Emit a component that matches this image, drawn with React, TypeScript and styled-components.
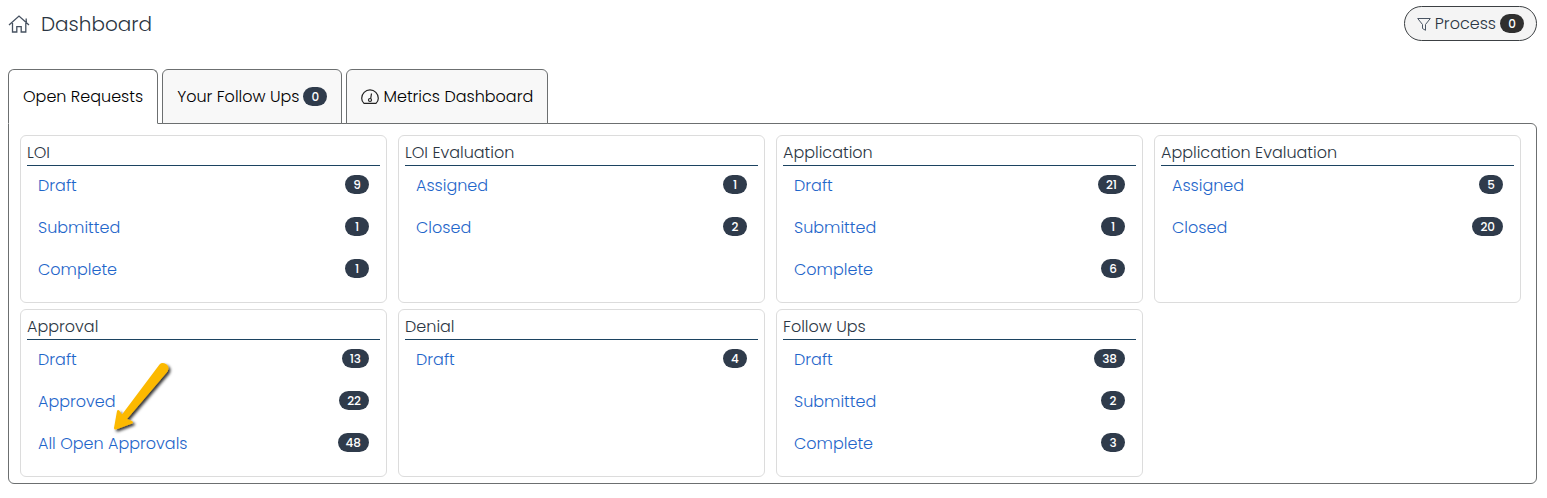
import React from "react";
import styled, { createGlobalStyle, css } from "styled-components";

const GlobalStyle = createGlobalStyle`
  *, *::before, *::after { box-sizing: border-box; }
  body {
    margin: 0;
    background: #fff;
    color: #2b3643;
    font-family: Poppins, Inter, "Liberation Sans", sans-serif;
    font-size: 16px;
    font-weight: 300;
    line-height: 24px;
  }
`;

const Page = styled.main`
  padding: 6px 10px 14px 8px;
`;

const Header = styled.header`
  display: flex;
  align-items: center;
  justify-content: space-between;
  height: 35px;
  margin-bottom: 28px;
`;

const Title = styled.h1`
  display: flex;
  align-items: center;
  gap: 11px;
  margin: 0;
  font-size: 20px;
  font-weight: 300;
  line-height: 32px;
`;

const Badge = styled.span<{ $dark?: boolean }>`
  display: inline-block;
  min-width: 24px;
  padding: 0 8px;
  border-radius: 10px;
  background: ${(p) => (p.$dark ? "#2f2f2f" : "#2f3b4b")};
  color: #fff;
  font-size: 12px;
  font-weight: 500;
  line-height: 19px;
  text-align: center;
`;

const ProcessButton = styled.button`
  display: flex;
  align-items: center;
  gap: 4px;
  height: 35px;
  padding: 0 12px;
  border: 1px solid #3c4043;
  border-radius: 18px;
  background: #f4f4f4;
  color: inherit;
  font: inherit;
`;

const TabList = styled.div`
  display: flex;
  gap: 4px;
`;

const Tab = styled.button<{ $active?: boolean }>`
  position: relative;
  display: flex;
  align-items: center;
  gap: 4px;
  height: 55px;
  margin-bottom: -1px;
  padding: 0 14px;
  border: 1px solid #6c6f70;
  border-radius: 6px 6px 0 0;
  background: #f8f8f8;
  color: #000;
  font: inherit;
  ${(p) =>
    p.$active &&
    css`
      border-bottom-color: #fff;
      background: #fff;
    `}
`;

const Panel = styled.section`
  display: grid;
  grid-template-columns: repeat(4, 1fr);
  gap: 6px 11px;
  padding: 11px 15px 6px 11px;
  border: 1px solid #6c6f70;
  border-radius: 0 6px 6px 6px;
`;

const Card = styled.section`
  min-height: 168px;
  padding: 5px 6px;
  border: 1px solid #dcdcdc;
  border-radius: 6px;
`;

const CardTitle = styled.h2`
  margin: 0;
  border-bottom: 1px solid #1c4361;
  font-size: 16px;
  font-weight: 300;
  line-height: 24px;
`;

const StatusList = styled.ul`
  margin: 0;
  padding: 0 11px;
  list-style: none;
`;

const StatusRow = styled.li`
  display: flex;
  align-items: flex-start;
  justify-content: space-between;
  height: 42px;
  padding-top: 8px;

  ${Badge} {
    margin-top: 1px;
  }
`;

const StatusLink = styled.a`
  color: #1f66ca;
  text-decoration: none;
`;

const Arrow = styled.svg`
  position: absolute;
  top: 355px;
  left: 100px;
  pointer-events: none;
`;

const HomeIcon = () => (
  <svg width="22" height="20" viewBox="0 0 22 20" fill="none" stroke="#465160" strokeWidth="1.3" aria-hidden="true">
    <path d="M1 11 11 2l10 9M4.500 9V18H8.800V12.700H13.200V18H17.800V9M18.200 8V4.500" />
  </svg>
);

const FunnelIcon = () => (
  <svg width="14" height="14" viewBox="0 0 14 14" fill="none" stroke="#4a5563" aria-hidden="true">
    <path d="M.7 1.500h12.600L8.500 7.500V13.300L5.500 11.500V7.500Z" />
  </svg>
);

const GaugeIcon = () => (
  <svg width="18" height="16" viewBox="0 0 18 16" fill="none" stroke="#222" strokeWidth="1.200" aria-hidden="true">
    <path d="M3 14.400C1.500 13 .7 11 .7 9.200a8.300 8.300 0 0 1 16.600 0C17.300 11 16.500 13 15 14.400ZM10.500 4.500 9.700 9.500" />
    <circle cx="9" cy="11" r="1.500" />
  </svg>
);

type Status = [label: string, count: number];

const groups: { title: string; items: Status[] }[] = [
  { title: "LOI", items: [["Draft", 9], ["Submitted", 1], ["Complete", 1]] },
  { title: "LOI Evaluation", items: [["Assigned", 1], ["Closed", 2]] },
  { title: "Application", items: [["Draft", 21], ["Submitted", 1], ["Complete", 6]] },
  { title: "Application Evaluation", items: [["Assigned", 5], ["Closed", 20]] },
  { title: "Approval", items: [["Draft", 13], ["Approved", 22], ["All Open Approvals", 48]] },
  { title: "Denial", items: [["Draft", 4]] },
  { title: "Follow Ups", items: [["Draft", 38], ["Submitted", 2], ["Complete", 3]] },
];

export default function App() {
  return (
    <>
      <GlobalStyle />
      <Page>
        <Header>
          <Title>
            <HomeIcon />
            Dashboard
          </Title>
          <ProcessButton type="button">
            <FunnelIcon />
            Process
            <Badge $dark>0</Badge>
          </ProcessButton>
        </Header>
        <TabList role="tablist">
          <Tab type="button" role="tab" id="tab-open" aria-selected aria-controls="panel-open" $active>
            Open Requests
          </Tab>
          <Tab type="button" role="tab" aria-selected={false}>
            Your Follow Ups
            <Badge>0</Badge>
          </Tab>
          <Tab type="button" role="tab" aria-selected={false}>
            <GaugeIcon />
            Metrics Dashboard
          </Tab>
        </TabList>
        <Panel role="tabpanel" id="panel-open" aria-labelledby="tab-open">
          {groups.map((group) => (
            <Card key={group.title}>
              <CardTitle>{group.title}</CardTitle>
              <StatusList>
                {group.items.map(([label, count]) => (
                  <StatusRow key={label}>
                    <StatusLink href="#">{label}</StatusLink>
                    <Badge>{count}</Badge>
                  </StatusRow>
                ))}
              </StatusList>
            </Card>
          ))}
        </Panel>
      </Page>
      <Arrow width="76" height="84" viewBox="0 0 76 84" aria-hidden="true">
        <defs>
          <filter id="arrow-shadow" x="-20%" y="-20%" width="150%" height="150%">
            <feDropShadow dx="2" dy="2" stdDeviation="1.500" floodColor="#000" floodOpacity="0.8" />
          </filter>
        </defs>
        <path
          d="M59.500 9.500Q62 7 66 9Q70 12 67.500 16.500L27 64L32 66Q34 67.500 32 68.500L16 74.500Q14 75 14 73L17 56Q18 54 20 56.500L22 59.500Z"
          fill="#fcb900"
          filter="url(#arrow-shadow)"
        />
      </Arrow>
    </>
  );
}
